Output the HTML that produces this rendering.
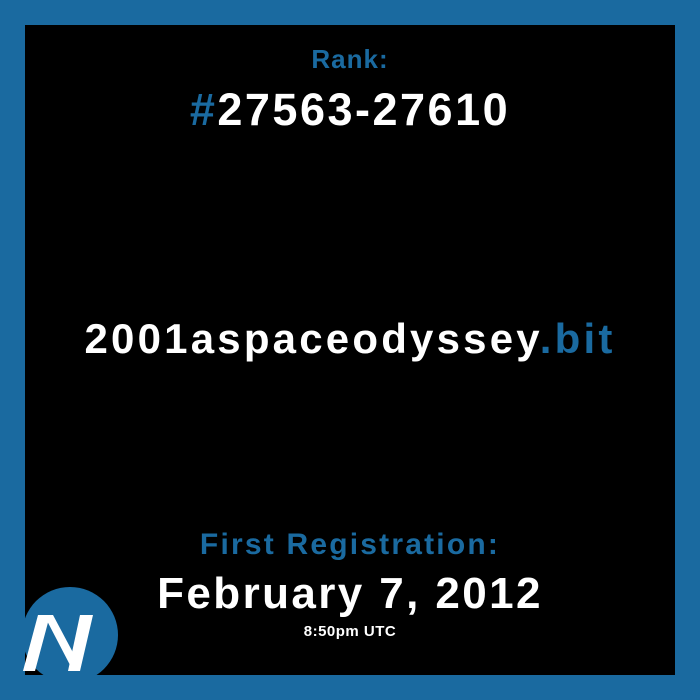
<!DOCTYPE html>
<html><head><style>
html,body{margin:0;padding:0}
body{width:700px;height:700px;background:#1a6aa0;position:relative;overflow:hidden;font-family:"Liberation Sans",sans-serif;font-weight:bold}
#in{position:absolute;left:25px;top:25px;width:650px;height:650px;background:#000}
.t{position:absolute;left:0;width:700px;text-align:center;white-space:nowrap;line-height:1}
.b{color:#1a6aa0}.w{color:#fff}
</style></head><body>
<div id="in"></div>
<div class="t b" style="top:46px;font-size:26px;letter-spacing:1px">Rank:</div>
<div class="t w" style="top:87px;font-size:45px;letter-spacing:2.5px"><span class="b">#</span>27563-27610</div>
<div class="t w" style="top:318px;font-size:42px;letter-spacing:3.2px">2001aspaceodyssey<span class="b">.bit</span></div>
<div class="t b" style="top:530px;font-size:30px;letter-spacing:2.2px">First Registration:</div>
<div class="t w" style="top:572px;font-size:44px;letter-spacing:2.4px">February 7, 2012</div>
<div class="t w" style="top:624px;font-size:15px;letter-spacing:0.5px">8:50pm UTC</div>
<svg style="position:absolute;left:0;top:0" width="700" height="700">
<circle cx="70" cy="635" r="48" fill="#1a6aa0"/>
<g fill="#fff">
<polygon points="23,671 35,671 50,615 38,615"/>
<polygon points="44,615 53,615 78,662 70,665"/>
<polygon points="80,615 93,615 80,671 68,671"/>
</g>
</svg>
</body></html>
